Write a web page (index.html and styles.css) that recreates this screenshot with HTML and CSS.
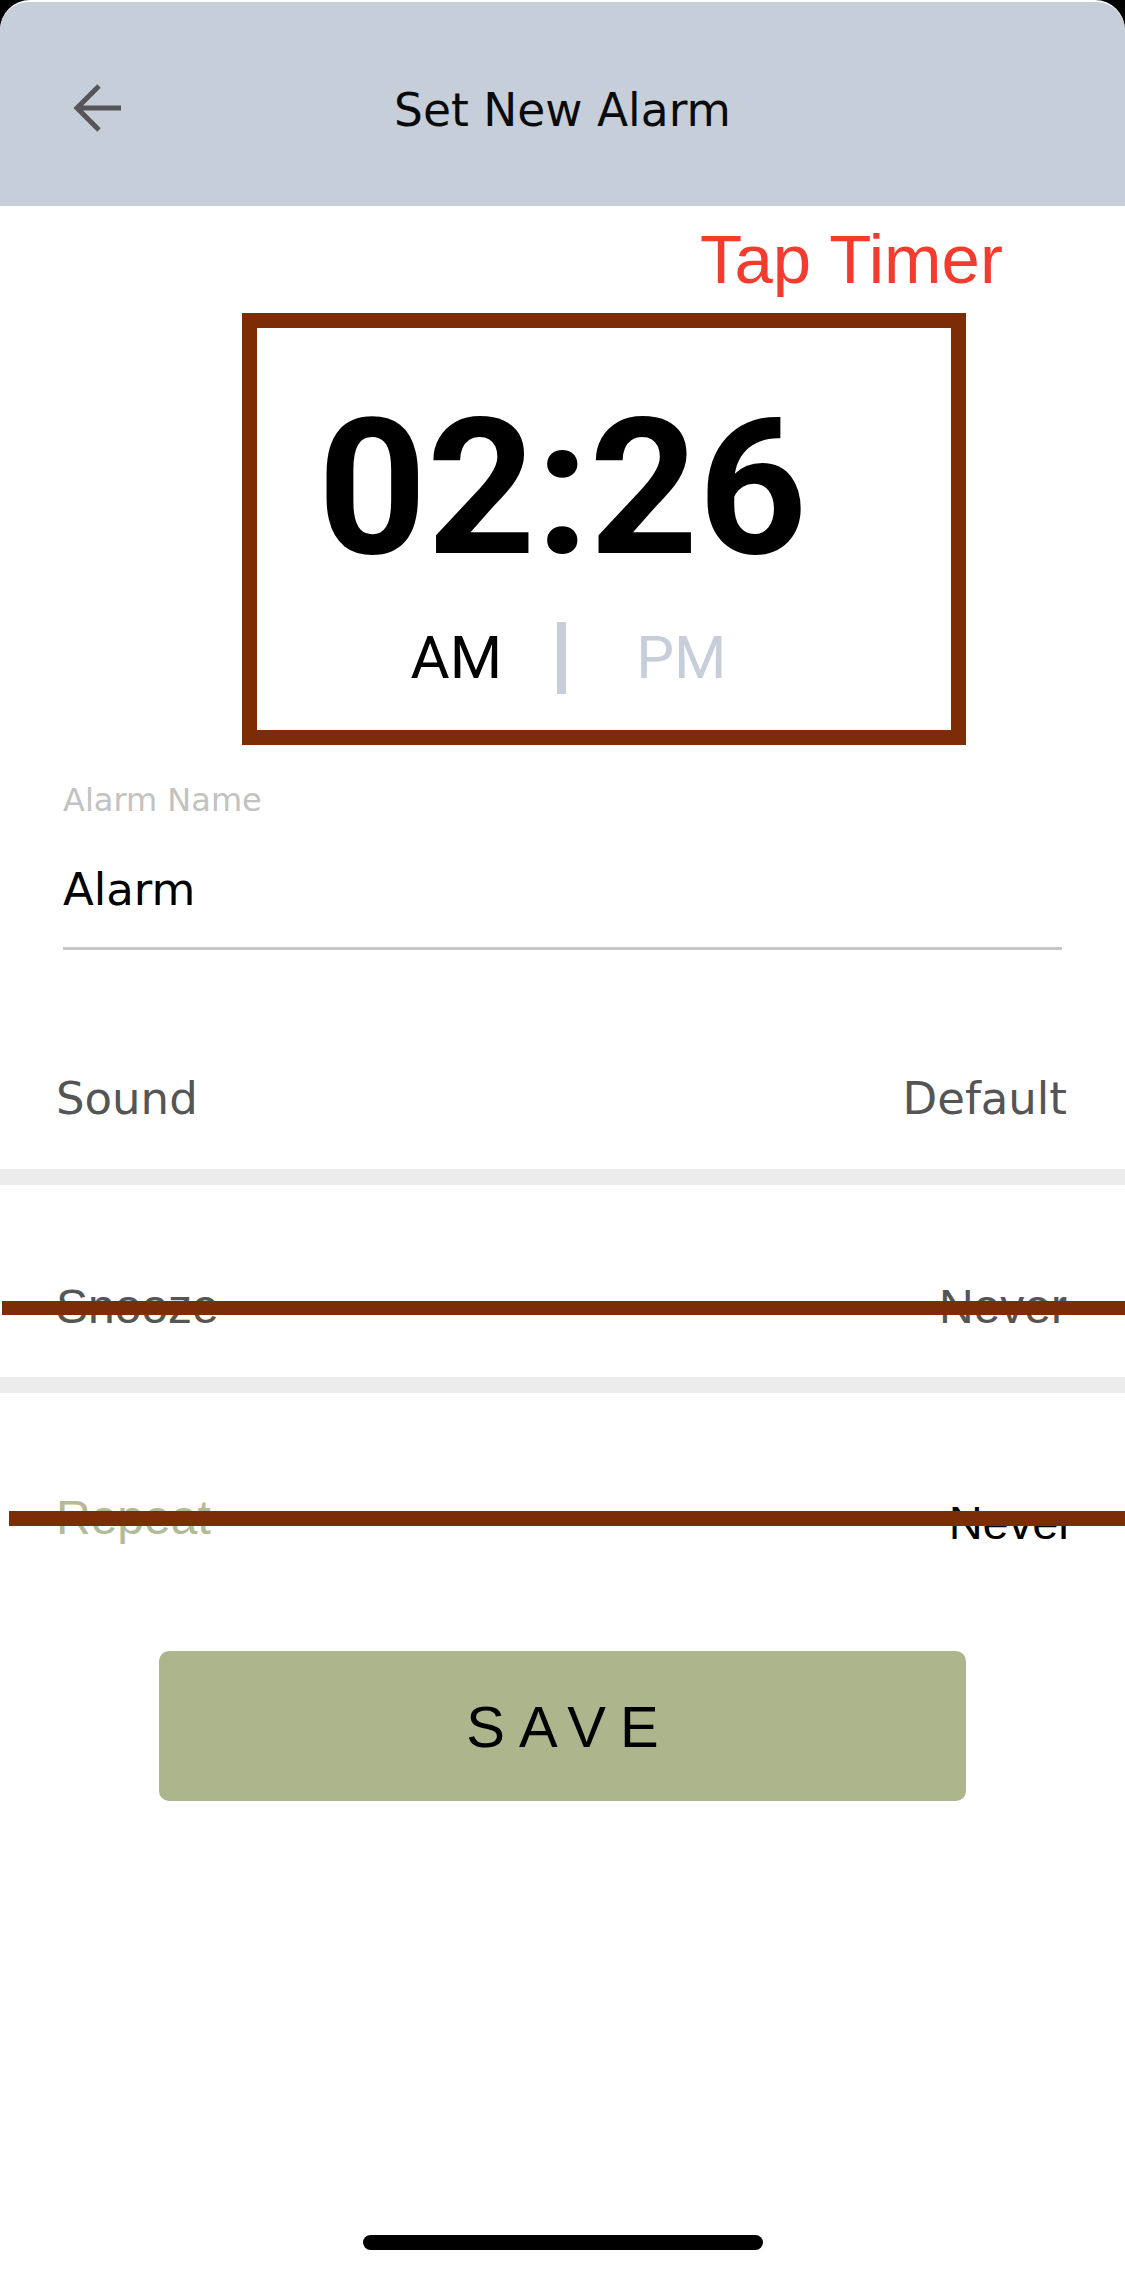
FILE: index.html
```html
<!DOCTYPE html>
<html lang="en">
<head>
<meta charset="utf-8">
<title>Set New Alarm</title>
<link rel="stylesheet" href="styles.css">
</head>
<body>
<div class="screen">
  <header class="topbar">
    <div class="back">
      <svg width="50" height="50" viewBox="0 0 50 50" aria-hidden="true">
        <path d="M49 25 H5 M27 3 L5 25 L27 47" fill="none" stroke="#555558" stroke-width="5" stroke-linejoin="miter"/>
      </svg>
    </div>
    <h1 class="title">Set New Alarm</h1>
    <div></div>
  </header>

  <section class="clock">
    <div class="time">02:26</div>
    <div class="ampm">
      <span class="am">AM</span>
      <span class="sep"></span>
      <span class="pm">PM</span>
    </div>
  </section>

  <section class="field">
    <div class="field-label">Alarm Name</div>
    <div class="field-value">Alarm</div>
  </section>

  <div class="row row-sound">
    <span>Sound</span>
    <span>Default</span>
  </div>
  <div class="band"></div>
  <div class="row row-snooze">
    <span>Snooze</span>
    <span>Never</span>
  </div>
  <div class="band"></div>
  <div class="row row-repeat">
    <span class="repeat-label">Repeat</span>
    <span class="repeat-value">Never</span>
  </div>

  <button class="save">SAVE</button>

  <div class="home"></div>

  <div class="note-text">Tap Timer</div>
  <div class="note-box"></div>
  <div class="note-strike strike-1"></div>
  <div class="note-strike strike-2"></div>
</div>
</body>
</html>
```

FILE: styles.css
```css
html, body {
  margin: 0;
  padding: 0;
  background: #000;
}

.screen {
  position: relative;
  width: 1125px;
  min-height: 2274px;
  background: #fff;
  border-radius: 30px 30px 0 0;
  overflow: hidden;
  display: flex;
  flex-direction: column;
}

.topbar {
  margin-top: 2px;
  height: 204px;
  box-sizing: border-box;
  padding-top: 8px;
  background: #c6ced9;
  border-radius: 28px 28px 0 0;
  display: grid;
  grid-template-columns: 1fr auto 1fr;
  align-items: center;
}

.back {
  padding-left: 72px;
  display: flex;
  align-items: center;
}

.back svg {
  display: block;
}

.title {
  margin: 0;
  padding-top: 6px;
  font-family: "DejaVu Sans", sans-serif;
  font-weight: normal;
  font-size: 45.5px;
  line-height: 1;
  color: #0a0a0a;
}

.clock {
  padding-top: 187px;
  display: flex;
  flex-direction: column;
  align-items: center;
}

.time {
  font-family: Roboto, "Liberation Sans", sans-serif;
  font-weight: 700;
  font-size: 190px;
  line-height: 1;
  color: #000;
}

.ampm {
  margin-top: 39px;
  height: 72px;
  display: flex;
  align-items: center;
  padding-left: 12px;
  font-family: Roboto, "Liberation Sans", sans-serif;
  font-size: 60px;
  line-height: 72px;
}

.am {
  color: #000;
  margin-right: 55px;
}

.sep {
  width: 9px;
  height: 72px;
  background: #c6ced9;
}

.pm {
  color: #c6ced9;
  margin-left: 70px;
}

.field {
  margin: 87px 63px 0;
  border-bottom: 3px solid #c6c6c6;
  padding-bottom: 30px;
  font-family: "DejaVu Sans", sans-serif;
}

.field-label {
  font-size: 32px;
  line-height: 1.2;
  color: #c2c2c2;
}

.field-value {
  margin-top: 44px;
  font-size: 45px;
  line-height: 1.2;
  color: #000;
}

.row {
  height: 192px;
  box-sizing: border-box;
  display: flex;
  justify-content: space-between;
  align-items: flex-start;
}

.row-sound {
  margin-top: 27px;
  padding: 95px 58px 0 56px;
  font-family: "DejaVu Sans", sans-serif;
  font-size: 45px;
  line-height: 1.2;
  color: #555;
}

.band {
  height: 16px;
  background: #ececec;
}

.row-snooze {
  padding: 93px 58px 0 56px;
  font-family: "Liberation Sans", Arial, sans-serif;
  font-size: 48px;
  line-height: 1.2;
  color: #555;
}

.row-repeat {
  padding: 96px 51px 0 56px;
  font-family: "Liberation Sans", Arial, sans-serif;
  font-size: 48px;
  line-height: 1.2;
}

.repeat-label {
  color: #b4ba98;
}

.repeat-value {
  margin-top: 6px;
  font-size: 47px;
  color: #000;
}

.save {
  align-self: center;
  margin-top: 66px;
  width: 807px;
  height: 150px;
  border: none;
  border-radius: 10px;
  background: #adb58c;
  font-family: "Liberation Sans", Arial, sans-serif;
  font-size: 58px;
  letter-spacing: 14px;
  padding: 0 0 0 14px;
  color: #000;
}

.home {
  align-self: center;
  margin-top: auto;
  margin-bottom: 24px;
  width: 400px;
  height: 15px;
  border-radius: 8px;
  background: #000;
}

/* annotation overlays drawn on top of the screenshot */
.note-text {
  position: absolute;
  left: 700px;
  top: 225px;
  font-family: "Liberation Sans", Arial, sans-serif;
  font-size: 69px;
  line-height: 1;
  color: #f53a2e;
}

.note-box {
  position: absolute;
  left: 242px;
  top: 313px;
  width: 724px;
  height: 432px;
  box-sizing: border-box;
  border: 15px solid #7d2d06;
}

.note-strike {
  position: absolute;
  right: 0;
  background: #7d2d06;
}

.strike-1 {
  left: 2px;
  top: 1301px;
  height: 14px;
}

.strike-2 {
  left: 9px;
  top: 1511px;
  height: 15px;
}
```
